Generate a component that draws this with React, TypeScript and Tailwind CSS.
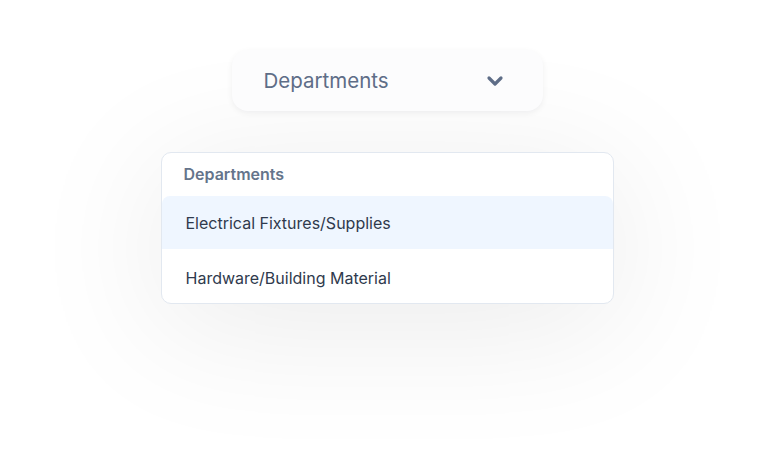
import { ChevronDown } from 'lucide-react';

const items = ['Electrical Fixtures/Supplies', 'Hardware/Building Material'];

export default function App() {
  return (
    <div
      className="w-[774px] h-[470px] bg-white flex flex-col items-center overflow-hidden"
      style={{ fontFamily: 'Inter, "Noto Sans", sans-serif' }}
    >
      {/* Trigger */}
      <button className="mt-[50px] w-[311px] h-[61px] rounded-2xl bg-[#fcfcfd] shadow-[0_2px_6px_rgba(15,23,42,0.06)] flex items-center justify-between pl-8 pr-[36px] pt-[2px] relative z-10">
        <span className="text-[20.5px] text-[#5e6d87]">Departments</span>
        <ChevronDown size={24} strokeWidth={3.2} className="text-[#5e6d87] -mt-[2px]" />
      </button>

      {/* Menu */}
      <div className="mt-[41px] w-[453px] rounded-[10px] border border-[#e2e8f0] bg-white shadow-[0_20px_140px_rgba(0,0,0,0.085)]">
        <div className="h-[43px] flex items-center px-[22px] pb-[2px] text-[16px] font-semibold text-[#64748b]">
          Departments
        </div>
        {items.map((item, i) => (
          <div
            key={item}
            className={`flex items-center px-6 text-[16px] text-[#2f3a4d] ${
              i === 0 ? 'h-[53px] bg-[#eff6ff] rounded-t-[8px]' : 'h-[54px] pt-[3px]'
            }`}
          >
            {item}
          </div>
        ))}
      </div>
    </div>
  );
}
